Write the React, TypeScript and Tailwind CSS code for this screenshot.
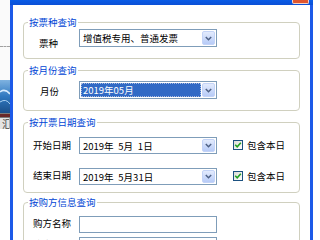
import React from "react";

const FONT = { fontFamily: '"Noto Sans CJK SC", "Noto Sans", sans-serif' };

function DropBtn() {
  return (
    <div className="w-[13px] h-full shrink-0 rounded-[2px] border border-[#c3d3f7] bg-gradient-to-b from-[#e3ebfd] to-[#b7cbf7] flex items-center justify-center">
      <svg width="7" height="5" viewBox="0 0 7 5">
        <path d="M0.8 1 L3.5 3.7 L6.2 1" fill="none" stroke="#4d6185" strokeWidth="1.5" />
      </svg>
    </div>
  );
}

function Combo({ text, selected, h }: { text: string; selected?: boolean; h: string }) {
  return (
    <div className={`w-[138px] ${h} shrink-0 border border-[#7f9db9] bg-white flex p-[1px] gap-[1px]`}>
      {selected ? (
        <div className="flex-1 bg-[#316ac5] border border-dotted border-[#a8bce0] flex items-center pl-[1px] text-white text-[9.5px] leading-[12px] whitespace-pre">
          {text}
        </div>
      ) : (
        <div className="flex-1 flex items-center pl-[2px] text-black text-[9.5px] leading-[12px] whitespace-pre">
          {text}
        </div>
      )}
      <DropBtn />
    </div>
  );
}

function Check() {
  return (
    <div className="flex items-center">
      <div className="w-[10px] h-[10px] border border-[#1c5180] bg-gradient-to-br from-[#dcdcd7] to-white flex items-center justify-center">
        <svg width="8" height="8" viewBox="0 0 8 8">
          <path d="M1.2 3.8 L3.2 5.8 L6.8 1.8" fill="none" stroke="#21a121" strokeWidth="1.6" />
        </svg>
      </div>
      <span className="ml-[4px] text-[9.5px] leading-[12px] text-black">包含本日</span>
    </div>
  );
}

function Group({ title, mt, pb, children }: { title: string; mt: string; pb: string; children: React.ReactNode }) {
  return (
    <div className={`mx-[10px] ${mt} ${pb} border border-[#d0d0bf] rounded-[4px]`}>
      <span className="block w-fit -mt-[7px] ml-[4px] px-[1px] bg-white text-[9.5px] leading-[12px] text-[#0046d5]">
        {title}
      </span>
      {children}
    </div>
  );
}

function Label({ text, cls }: { text: string; cls: string }) {
  return (
    <div className={`w-[55px] shrink-0 text-[9.5px] leading-[12px] text-black whitespace-nowrap ${cls}`}>{text}</div>
  );
}

function Desktop() {
  return (
    <div className="w-[10px] shrink-0 flex flex-col bg-[#fafafa]">
      <div className="h-[46px]" />
      <div className="h-[1px] border-t border-dashed border-[#a0a0a0]" />
      <div className="h-[33px]" />
      <svg width="10" height="33" viewBox="0 0 10 33" className="block">
        <defs>
          <linearGradient id="g1" x1="0" y1="0" x2="0" y2="1">
            <stop offset="0" stopColor="#7fb2e0" />
            <stop offset="0.5" stopColor="#2f78c0" />
            <stop offset="1" stopColor="#1b4f8a" />
          </linearGradient>
        </defs>
        <rect width="10" height="33" fill="url(#g1)" />
        <path d="M0 12 Q5 8 10 14" stroke="#d8ecff" strokeWidth="1.5" fill="none" />
        <path d="M0 22 Q6 18 10 24" stroke="#a9d0f2" strokeWidth="1" fill="none" />
      </svg>
      <div className="h-[5px] bg-[#7c7c7c] flex items-center">
        <div className="h-[3px] w-full bg-[#6a2828]" />
      </div>
      <div className="h-[11px] bg-[#e4e4e4] overflow-hidden flex justify-end border-r border-[#b0b0b0]">
        <span className="text-[10px] leading-[11px] text-[#444] -mr-[3px]">汇</span>
      </div>
      <div className="flex-1 bg-white" />
    </div>
  );
}

export default function App() {
  return (
    <div className="w-[320px] h-[240px] overflow-hidden flex bg-white" style={FONT}>
      <Desktop />
      <div className="w-[303px] shrink-0 flex flex-col">
        <div className="h-[5px] shrink-0 bg-gradient-to-b from-[#0a5ce6] to-[#0b4fd6] flex justify-end">
          <div className="mr-[4px] w-[17px] h-[4px] rounded-b-[2px] border border-t-0 border-[#f3d2c4] bg-[#e0562e]" />
        </div>
        <div className="flex-1 flex">
          <div className="w-[3px] shrink-0 bg-[#1d5ae8]" />
          <div className="flex-1 bg-white flex flex-col">
            <Group title="按票种查询" mt="mt-[17px]" pb="pb-[9px]">
              <div className="flex items-start mt-[1px]">
                <Label text="票种" cls="pl-[15px] pt-[8px]" />
                <Combo text="增值税专用、普通发票" h="h-[18px]" />
              </div>
            </Group>
            <Group title="按月份查询" mt="mt-[11px]" pb="pb-[11px]">
              <div className="flex items-start mt-[5px]">
                <Label text="月份" cls="pl-[16px] pt-[4px]" />
                <Combo text="2019年05月" selected h="h-[18px]" />
              </div>
            </Group>
            <Group title="按开票日期查询" mt="mt-[11px]" pb="pb-[7px]">
              <div className="flex items-start mt-[9px]">
                <Label text="开始日期" cls="pl-[9px] pt-[2px]" />
                <Combo text={"2019年\u20025月\u20021日"} h="h-[17px]" />
                <div className="ml-[16px] pt-[2px]">
                  <Check />
                </div>
              </div>
              <div className="flex items-start mt-[14px]">
                <Label text="结束日期" cls="pl-[9px] pt-[1px]" />
                <Combo text={"2019年\u20025月31日"} h="h-[17px]" />
                <div className="ml-[16px] pt-[2px]">
                  <Check />
                </div>
              </div>
            </Group>
            <Group title="按购方信息查询" mt="mt-[9px]" pb="pb-[20px]">
              <div className="flex items-start mt-[8px]">
                <Label text="购方名称" cls="pl-[9px] pt-[1px]" />
                <div className="w-[138px] h-[17px] border border-[#7f9db9] bg-white" />
              </div>
              <div className="flex items-start mt-[4px]">
                <Label text="购方税号" cls="pl-[9px] pt-[1px]" />
                <div className="w-[138px] h-[17px] border border-[#7f9db9] bg-white" />
              </div>
            </Group>
          </div>
          <div className="w-[3px] shrink-0 bg-[#1d5ae8]" />
        </div>
      </div>
      <div className="flex-1 bg-white" />
    </div>
  );
}
